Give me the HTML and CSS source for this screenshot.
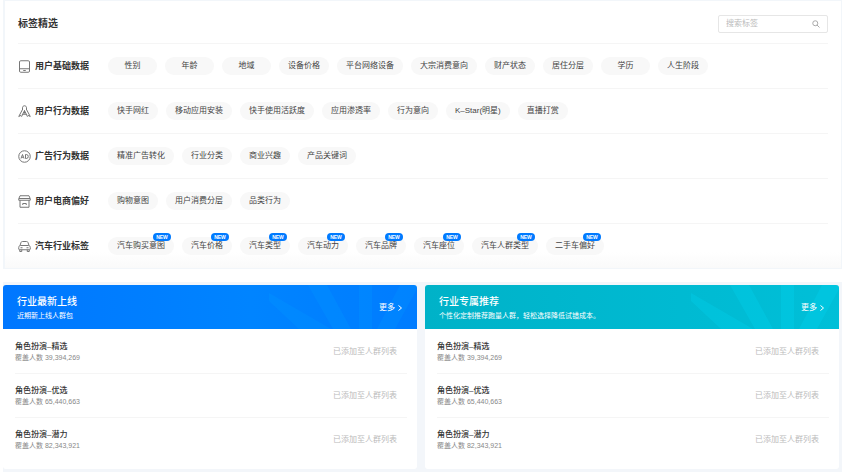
FILE: index.html
```html
<!DOCTYPE html>
<html lang="zh-CN">
<head>
  <meta charset="UTF-8">
  <meta name="viewport" content="width=device-width, initial-scale=1">
  <title>标签精选</title>
  <link rel="stylesheet" href="styles.css">
</head>
<body>
  <section class="tag-panel">
    <header class="panel-header">
      <h1>标签精选</h1>
      <form class="search">
        <input type="text" name="keyword" placeholder="搜索标签" aria-label="搜索标签">
        <button type="submit" aria-label="搜索">
          <svg width="8" height="8" viewBox="0 0 16 16"><circle cx="6.5" cy="6.5" r="5"/><path d="M10 10l5 5"/></svg>
        </button>
      </form>
    </header>

    <div class="tag-row">
      <h2>
        <svg width="13" height="13" viewBox="0 0 26 26"><rect x="3" y="1.5" width="20" height="23" rx="2.5"/><path d="M3 17.5h20M10.5 21h5"/></svg>
        用户基础数据
      </h2>
      <div class="tags">
        <button type="button">性别</button>
        <button type="button">年龄</button>
        <button type="button">地域</button>
        <button type="button">设备价格</button>
        <button type="button">平台网络设备</button>
        <button type="button">大宗消费意向</button>
        <button type="button">财产状态</button>
        <button type="button">居住分层</button>
        <button type="button">学历</button>
        <button type="button">人生阶段</button>
      </div>
    </div>

    <div class="tag-row">
      <h2>
        <svg width="13" height="13" viewBox="0 0 26 26"><path d="M9 10V5.500C9 3 11 1.500 13 1.500S17 3 17 5.500V10M9 9L1.500 23l5-2.500M17 9l7.500 14-5-2.500M13 11l-6 12.500M13 11l6 12.500M13 11v6"/><path d="M9.500 18.500h7"/></svg>
        用户行为数据
      </h2>
      <div class="tags">
        <button type="button">快手网红</button>
        <button type="button">移动应用安装</button>
        <button type="button">快手使用活跃度</button>
        <button type="button">应用渗透率</button>
        <button type="button">行为意向</button>
        <button type="button">K–Star(明星)</button>
        <button type="button">直播打赏</button>
      </div>
    </div>

    <div class="tag-row">
      <h2>
        <svg width="13" height="13" viewBox="0 0 26 26"><circle cx="13" cy="13" r="11.500"/><path d="M6 17l3-8 3 8M7.500 14.500h3M15 9v8h1.500a4 4 0 0 0 0-8z"/></svg>
        广告行为数据
      </h2>
      <div class="tags">
        <button type="button">精准广告转化</button>
        <button type="button">行业分类</button>
        <button type="button">商业兴趣</button>
        <button type="button">产品关键词</button>
      </div>
    </div>

    <div class="tag-row">
      <h2>
        <svg width="13" height="13" viewBox="0 0 26 26"><path d="M4 1.500h18l2.500 6v3H1.500v-3zM2 7h22M4 10.500v14h18v-14M9.500 20v-3h7v3"/></svg>
        用户电商偏好
      </h2>
      <div class="tags">
        <button type="button">购物意图</button>
        <button type="button">用户消费分层</button>
        <button type="button">品类行为</button>
      </div>
    </div>

    <div class="tag-row">
      <h2>
        <svg width="13" height="13" viewBox="0 0 26 26"><path d="M4 11l2-6c.5-1.500 1.500-2 3-2h8c1.500 0 2.500.5 3 2l2 6M5 11h16c2.500 0 3.500 2 3.500 4v3c0 1-.5 1.500-1.500 1.500H3c-1 0-1.500-.5-1.500-1.500v-3c0-2 1-4 3.500-4zM3.500 19.500V23h4v-3.500M18.500 19.500V23h4v-3.500M5 15.500h4M17 15.500h4"/></svg>
        汽车行业标签
      </h2>
      <div class="tags">
        <button type="button">汽车购买意图<span class="badge">NEW</span></button>
        <button type="button">汽车价格<span class="badge">NEW</span></button>
        <button type="button">汽车类型<span class="badge">NEW</span></button>
        <button type="button">汽车动力<span class="badge">NEW</span></button>
        <button type="button">汽车品牌<span class="badge">NEW</span></button>
        <button type="button">汽车座位<span class="badge">NEW</span></button>
        <button type="button">汽车人群类型<span class="badge">NEW</span></button>
        <button type="button">二手车偏好<span class="badge">NEW</span></button>
      </div>
    </div>
  </section>

  <section class="cards">
    <article class="card">
      <header class="card-header blue">
        <svg class="rays" viewBox="0 0 160 44" aria-hidden="true"><path d="M12 8l62 36H42L12 16zM51 0h19l24 44H76zM102 0h13v44h-13zM143 0h17v4l-22 40h-18z"/></svg>
        <div>
          <h2>行业最新上线</h2>
          <p>近期新上线人群包</p>
        </div>
        <a href="#">更多
          <svg width="4" height="6" viewBox="0 0 4 6"><path d="M.5.5L3.500 3 .5 5.500"/></svg>
        </a>
      </header>
      <ul>
        <li><div><h3>角色扮演–精选</h3><p>覆盖人数 39,394,269</p></div><span>已添加至人群列表</span></li>
        <li><div><h3>角色扮演–优选</h3><p>覆盖人数 65,440,663</p></div><span>已添加至人群列表</span></li>
        <li><div><h3>角色扮演–潜力</h3><p>覆盖人数 82,343,921</p></div><span>已添加至人群列表</span></li>
      </ul>
    </article>

    <article class="card">
      <header class="card-header teal">
        <svg class="rays" viewBox="0 0 160 44" aria-hidden="true"><path d="M12 8l62 36H42L12 16zM51 0h19l24 44H76zM102 0h13v44h-13zM143 0h17v4l-22 40h-18z"/></svg>
        <div>
          <h2>行业专属推荐</h2>
          <p>个性化定制推荐跑量人群，轻松选择降低试错成本。</p>
        </div>
        <a href="#">更多
          <svg width="4" height="6" viewBox="0 0 4 6"><path d="M.5.5L3.500 3 .5 5.500"/></svg>
        </a>
      </header>
      <ul>
        <li><div><h3>角色扮演–精选</h3><p>覆盖人数 39,394,269</p></div><span>已添加至人群列表</span></li>
        <li><div><h3>角色扮演–优选</h3><p>覆盖人数 65,440,663</p></div><span>已添加至人群列表</span></li>
        <li><div><h3>角色扮演–潜力</h3><p>覆盖人数 82,343,921</p></div><span>已添加至人群列表</span></li>
      </ul>
    </article>
  </section>
</body>
</html>
```

FILE: styles.css
```css
* {
  box-sizing: border-box;
}

body {
  margin: 0;
  padding-left: 3px;
  background: #fff;
  color: #333;
  font-family: "Liberation Sans", "Noto Sans CJK SC", sans-serif;
  font-size: 8px;
  line-height: 12px;
}

h1, h2, h3, p, ul {
  margin: 0;
  padding: 0;
}

button, input {
  font: inherit;
  color: inherit;
}

svg {
  flex: none;
  fill: none;
  stroke: currentColor;
}

.tag-panel {
  padding: 0 13px;
  border: 1px solid #f2f6fa;
  border-left-width: 2px;
  background: linear-gradient(#fff 94%, #fafafa);
}

.panel-header {
  display: flex;
  align-items: center;
  justify-content: space-between;
  height: 43px;
  padding-top: 3px;
  border-bottom: 1px solid #f5f5f5;
}

.panel-header h1 {
  font-size: 10px;
}

.search {
  display: flex;
  align-items: center;
  width: 110px;
  height: 18px;
  padding: 0 7px;
  border: 1px solid #e6e6e6;
  border-radius: 2px;
}

.search input {
  flex: 1;
  min-width: 0;
  padding: 0;
  border: none;
  outline: none;
  background: none;
}

.search input::placeholder {
  color: #bbb;
}

.search button {
  display: flex;
  padding: 0;
  border: none;
  background: none;
  color: #aaa;
  stroke-width: 2;
}

.tag-row {
  display: flex;
  align-items: center;
  height: 45px;
  border-bottom: 1px solid #f5f5f5;
}

.tag-row:last-child {
  height: 44px;
  border-bottom: none;
}

.tag-row h2 {
  display: flex;
  align-items: center;
  gap: 4px;
  width: 90px;
  font-size: 9px;
}

.tag-row h2 svg {
  color: #777;
  stroke-width: 2;
}

.tags {
  display: flex;
  gap: 8px;
}

.tags button {
  position: relative;
  min-width: 49px;
  height: 18px;
  padding: 0 9px;
  border: none;
  border-radius: 9px;
  background: #f8f8f8;
  color: #444;
  white-space: nowrap;
  cursor: pointer;
}

.badge {
  position: absolute;
  top: -4px;
  right: 3px;
  width: 18px;
  height: 8px;
  border-radius: 4px;
  background: #007aff;
  color: #fff;
  font-size: 5px;
  font-weight: bold;
  line-height: 8px;
}

.cards {
  display: grid;
  grid-template-columns: 1fr 1fr;
  gap: 8px;
  margin-top: 13px;
  padding: 3px 3px 3px 0;
  background: #f3f6fa;
}

.card {
  overflow: hidden;
  border-radius: 3px;
  background: #fff;
}

.card-header {
  position: relative;
  display: flex;
  align-items: center;
  justify-content: space-between;
  height: 44px;
  padding: 1px 15px 0 14px;
  color: #fff;
}

.blue {
  background: linear-gradient(90deg, #0077ff, #0084ff 60%, #007cff);
}

.teal {
  background: linear-gradient(90deg, #00b2c8, #00bfd8);
}

.rays {
  position: absolute;
  top: 0;
  right: 0;
  height: 100%;
  fill: #00e1ff;
  fill-opacity: 0.2;
  stroke: none;
}

.blue .rays {
  fill-opacity: 0.07;
}

.card-header h2 {
  font-size: 10px;
  font-weight: 500;
  line-height: 16px;
}

.card-header p {
  font-size: 7px;
}

.card-header a {
  position: relative;
  display: flex;
  align-items: center;
  gap: 3px;
  color: inherit;
  text-decoration: none;
}

.card ul {
  padding: 1px 10px 7px 12px;
  list-style: none;
}

.card li {
  display: flex;
  align-items: center;
  justify-content: space-between;
  height: 44px;
  padding-right: 10px;
  border-bottom: 1px solid #f5f5f5;
}

.card li:last-child {
  border-bottom: none;
}

.card h3 {
  font-size: 8px;
  font-weight: 500;
}

.card li p {
  color: #888;
  font-size: 7px;
  line-height: 10px;
}

.card li span {
  color: #bbb;
}
```
